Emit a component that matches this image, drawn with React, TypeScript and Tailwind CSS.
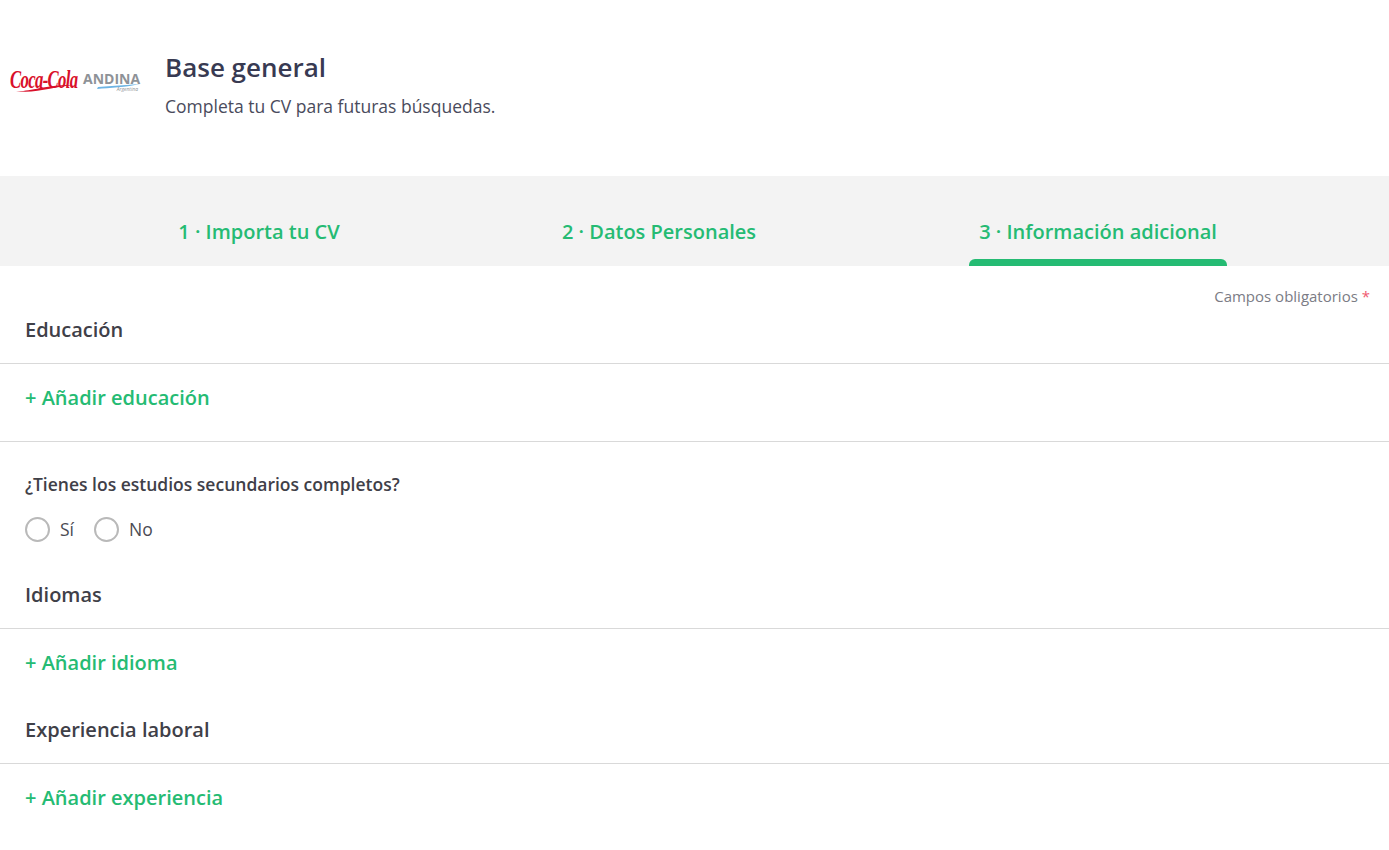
const TABS = [
  { label: '1 · Importa tu CV', active: false },
  { label: '2 · Datos Personales', active: false },
  { label: '3 · Información adicional', active: true },
];

function Logo() {
  return (
    <div className="mb-[6px] flex w-[130px] shrink-0 items-center pl-[10px]">
      <div className="relative h-[26px] w-[68px]">
        <span className="block origin-left scale-x-[0.67] whitespace-nowrap font-['Liberation_Serif',serif] text-[25px] leading-[24px] font-bold tracking-[-1px] text-[#d9102a] italic">
          Coca-Cola
        </span>
        <svg className="absolute top-[15px] left-0" width="68" height="10" viewBox="0 0 68 10" fill="none">
          <path d="M6 8C20 9 36 1 66 2C44 3 26 11 6 8Z" fill="#d9102a" />
        </svg>
      </div>
      <div className="relative ml-[5px] h-[24px] w-[57px]">
        <span className="block font-['Open_Sans',sans-serif] text-[14px] leading-[20px] font-bold text-[#8e9297]">
          ANDINA
        </span>
        <svg className="absolute top-[15px] left-[14px]" width="43" height="5" viewBox="0 0 43 5" fill="none">
          <path d="M0 5C12 4 30 3 43 0C30 1 14 2 1 3Z" fill="#6db4e4" />
        </svg>
        <span className="absolute top-[17px] right-[2px] text-[5px] leading-[6px] text-[#8e9297] italic">Argentina</span>
      </div>
    </div>
  );
}

function SectionTitle({ title, className }: { title: string; className: string }) {
  return (
    <div className={`flex items-center border-b border-[#d9d9d9] pl-[25px] text-[20px] font-semibold text-[#3f4048] ${className}`}>
      {title}
    </div>
  );
}

function AddLink({ label, className }: { label: string; className: string }) {
  return (
    <div className={`flex items-center pl-[25px] text-[20px] font-semibold text-[#25bb73] ${className}`}>
      {label}
    </div>
  );
}

function Radio({ label }: { label: string }) {
  return (
    <label className="flex items-center gap-[10px] text-[17.5px] text-[#4a4b53]">
      <span className="h-[25px] w-[25px] rounded-full border-2 border-[#b9b9b9] bg-white" />
      {label}
    </label>
  );
}

export default function App() {
  return (
    <div className="min-h-[850px] bg-white font-['Open_Sans',sans-serif]">
      <header className="flex h-[176px] items-center pb-[8px]">
        <Logo />
        <div className="ml-[35px]">
          <h1 className="text-[26px] leading-[34px] font-semibold text-[#383a52]">Base general</h1>
          <p className="mt-[10px] text-[17.5px] leading-[24px] text-[#4a4b5c]">Completa tu CV para futuras búsquedas.</p>
        </div>
      </header>

      <nav className="grid h-[90px] grid-cols-[518px_282px_1fr] bg-[#f3f3f3]">
        {TABS.map((tab) => (
          <div key={tab.label} className="relative flex items-center justify-center pt-[22px]">
            <span className={`text-[20px] font-semibold text-[#25bb73] ${tab.active ? 'ml-[7px]' : ''}`}>{tab.label}</span>
            {tab.active && (
              <span className="absolute bottom-0 left-[169px] h-[7px] w-[258px] rounded-t-[6px] bg-[#25bb73]" />
            )}
          </div>
        ))}
      </nav>

      <p className="h-[22px] pt-[20px] pr-[19px] text-right text-[15px] leading-[20px] text-[#7b7c85]">
        Campos obligatorios <span className="text-[#f0596f]">*</span>
      </p>
      <SectionTitle title="Educación" className="h-[76px] pt-[9px]" />
      <AddLink label="+ Añadir educación" className="h-[78px] border-b border-[#d9d9d9] pb-[10px]" />

      <div className="h-[125px] pt-[30px] pl-[25px]">
        <p className="text-[17.5px] leading-[24px] font-semibold text-[#3f4048]">¿Tienes los estudios secundarios completos?</p>
        <div className="mt-[20px] flex gap-[20px]">
          <Radio label="Sí" />
          <Radio label="No" />
        </div>
      </div>

      <SectionTitle title="Idiomas" className="h-[62px] pb-[6px]" />
      <AddLink label="+ Añadir idioma" className="h-[68px]" />
      <SectionTitle title="Experiencia laboral" className="h-[67px]" />
      <AddLink label="+ Añadir experiencia" className="h-[68px]" />
    </div>
  );
}
